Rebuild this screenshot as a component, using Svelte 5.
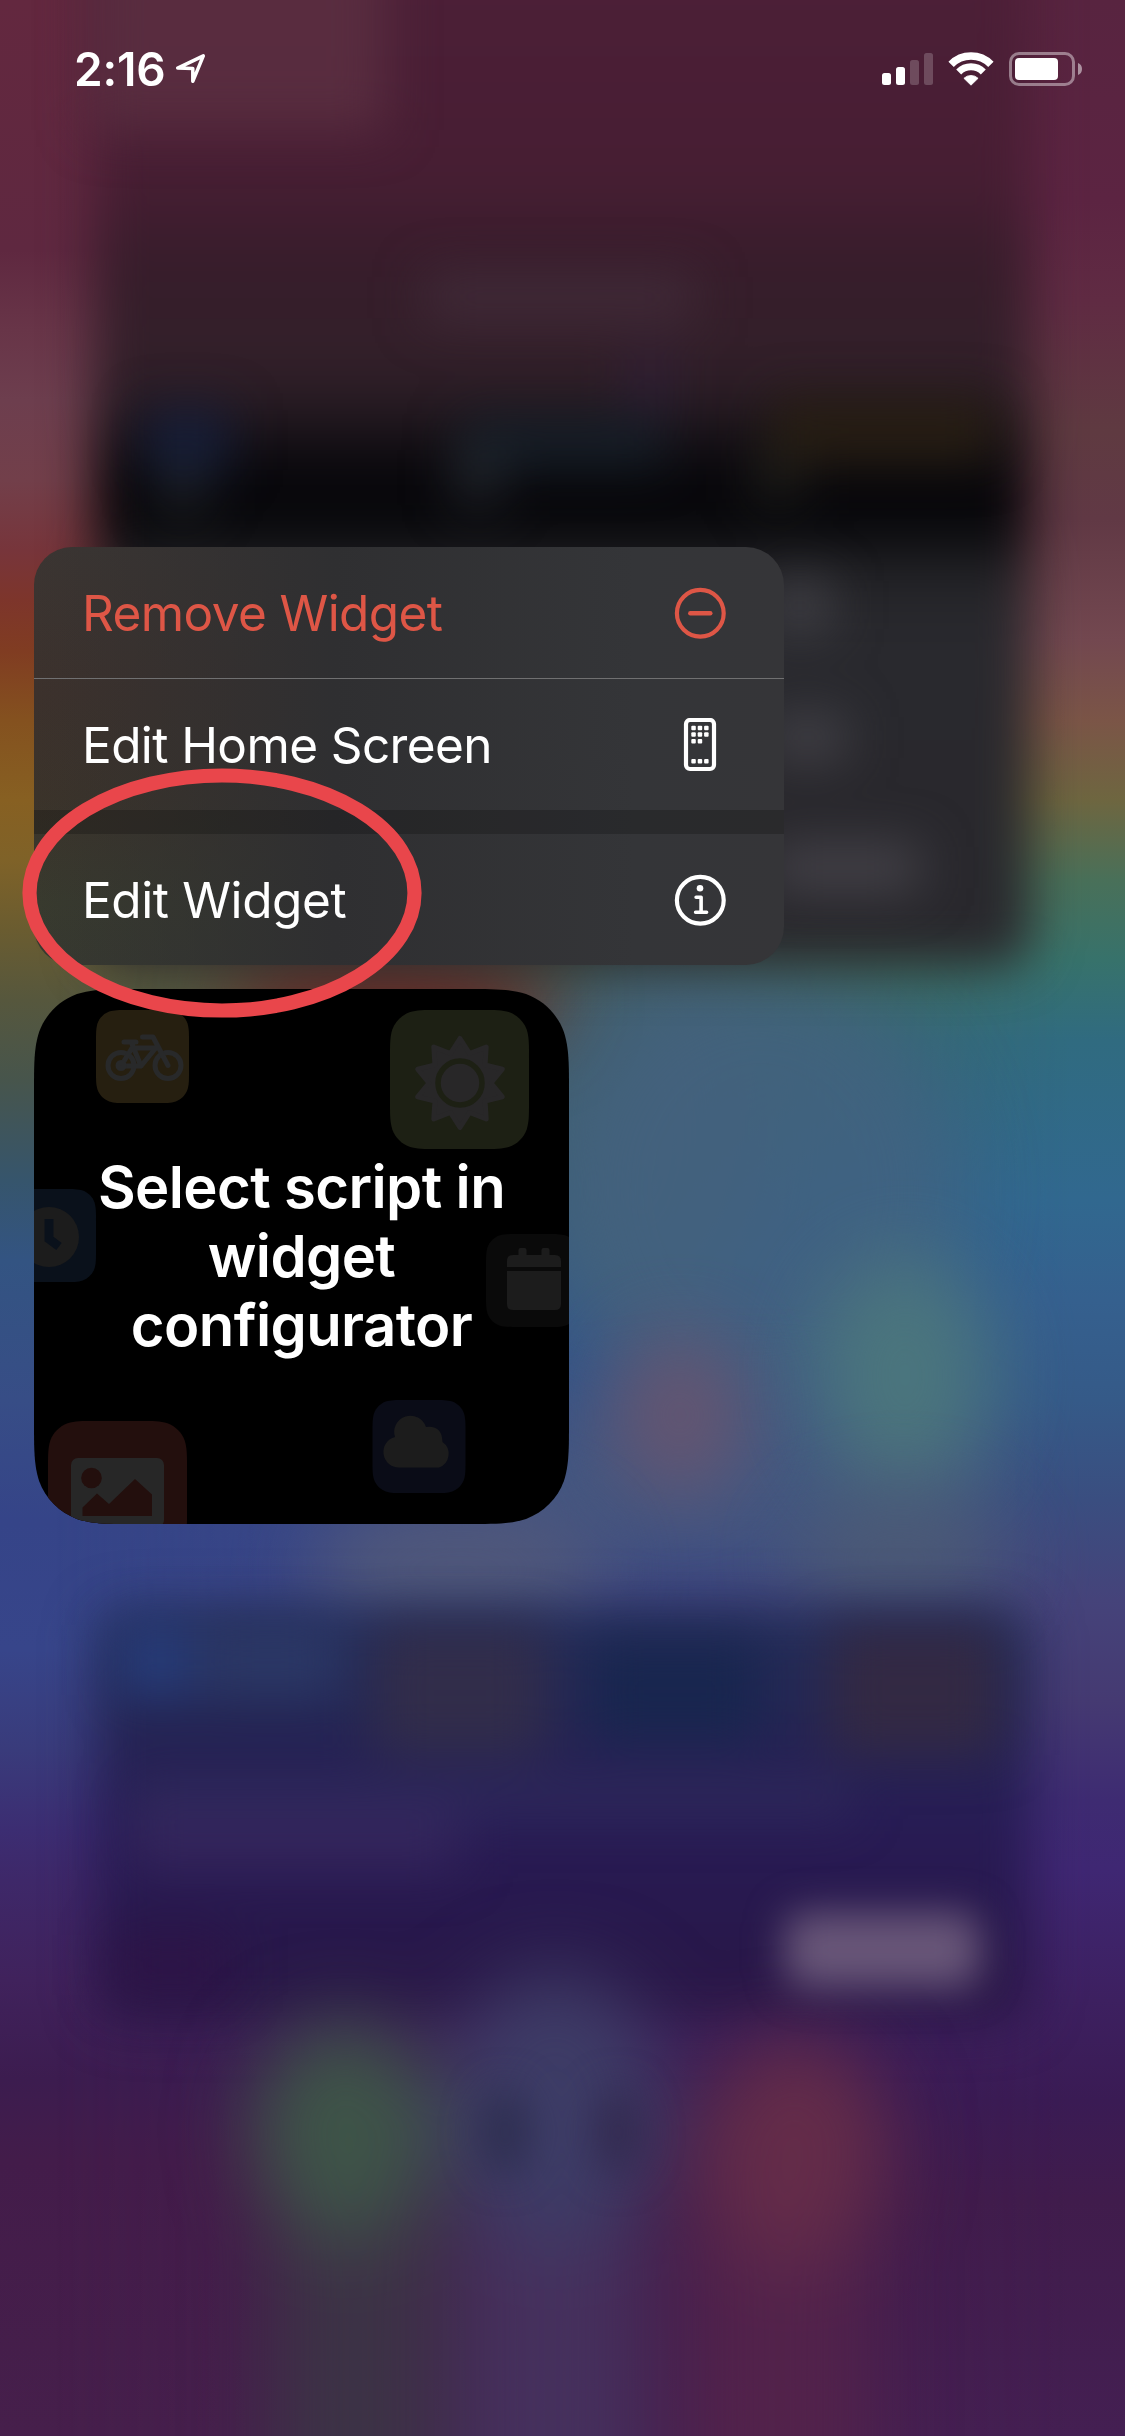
<script>
  const leftStops = [
    [0, '#63283f'], [250, '#5f2840'], [330, '#683548'], [400, '#6d3e4e'], [480, '#723f4a'], [550, '#77353b'],
    [600, '#7d352b'], [650, '#803c22'], [720, '#84511f'], [800, '#876022'], [860, '#7f6228'],
    [930, '#6a5c30'], [1000, '#56573d'], [1080, '#47554c'], [1180, '#36556c'], [1260, '#335482'],
    [1400, '#374d86'], [1520, '#354488'], [1650, '#37458a'], [1750, '#393b7b'], [1830, '#3c2d72'],
    [1880, '#3e2869'], [1980, '#40225c'], [2080, '#3c1c4f'], [2160, '#431c4a'], [2436, '#461f4b']
  ];
  const rightStops = [
    [0, '#582440'], [200, '#5c2442'], [300, '#602b43'], [430, '#5f3a41'], [520, '#613945'],
    [640, '#734850'], [720, '#7b5547'], [800, '#6e6640'], [880, '#497059'], [960, '#37726b'],
    [1040, '#306b80'], [1200, '#31688f'], [1300, '#35608e'], [1400, '#355a88'], [1500, '#3a4e80'],
    [1600, '#45437a'], [1700, '#453a72'], [1800, '#3e2b72'], [1870, '#3f2773'], [2000, '#3d2060'],
    [2100, '#3a1b54'], [2200, '#401c4c'], [2436, '#441f52']
  ];

  // Soft ellipses: cx, cy, rx, ry, fill, opacity
  const glows = [
    [640, 1130, 120, 190, '#436074', 0.8],
    [390, 1000, 170, 50, '#6a2321', 1],
    [760, 1190, 200, 220, '#446280', 0.75],
    [740, 1480, 260, 90, '#465b80', 0.7],
    [680, 1415, 70, 85, '#68556f', 0.9],
    [905, 1375, 90, 120, '#4e7a7c', 0.85],
    [460, 1570, 150, 80, '#525a7a', 0.9],
    [900, 1560, 110, 70, '#4e5c74', 0.8]
  ];
  const dock = [
    [345, 2130, 95, 110, '#3e5448', 1],
    [555, 2110, 110, 140, '#3d3c66', 1],
    [795, 2150, 95, 115, '#642c49', 1],
    [505, 2132, 24, 44, '#2b2c4c', 0.8],
    [618, 2132, 24, 44, '#31284c', 0.8]
  ];

  // Continuous-curvature rounded rectangle
  function squircle(x, y, w, h, r) {
    const R = x + w, B = y + h;
    const a = 1.5287 * r, b = 1.0885 * r, c = 0.8684 * r, d = 0.6315 * r, e = 0.3728 * r, f = 0.1691 * r, g = 0.0749 * r;
    return `M${x + a} ${y}L${R - a} ${y}C${R - b} ${y} ${R - c} ${y} ${R - d} ${y + g}C${R - e} ${y + f} ${R - f} ${y + e} ${R - g} ${y + d}C${R} ${y + c} ${R} ${y + b} ${R} ${y + a}` +
      `L${R} ${B - a}C${R} ${B - b} ${R} ${B - c} ${R - g} ${B - d}C${R - f} ${B - e} ${R - e} ${B - f} ${R - d} ${B - g}C${R - c} ${B} ${R - b} ${B} ${R - a} ${B}` +
      `L${x + a} ${B}C${x + b} ${B} ${x + c} ${B} ${x + d} ${B - g}C${x + e} ${B - f} ${x + f} ${B - e} ${x + g} ${B - d}C${x} ${B - c} ${x} ${B - b} ${x} ${B - a}` +
      `L${x} ${y + a}C${x} ${y + b} ${x} ${y + c} ${x + g} ${y + d}C${x + f} ${y + e} ${x + e} ${y + f} ${x + d} ${y + g}C${x + c} ${y} ${x + b} ${y} ${x + a} ${y}Z`;
  }

  const sunPoints = Array.from({ length: 20 }, (_, i) => {
    const t = (i * Math.PI) / 10 - Math.PI / 2;
    const r = i % 2 ? 31 : 44.5;
    return `${(426 + r * Math.cos(t)).toFixed(1)},${(94 + r * Math.sin(t)).toFixed(1)}`;
  }).join(' ');

  const appDots = [[0, 0], [1, 0], [2, 0], [0, 1], [1, 1], [2, 1], [0, 2], [1, 2], [0, 5], [1, 5], [2, 5]];
</script>

<main class="screen">
  <svg class="wallpaper" viewBox="0 0 1125 2436" aria-hidden="true">
    <defs>
      <linearGradient id="lg" gradientUnits="userSpaceOnUse" x1="0" y1="0" x2="0" y2="2436">
        {#each leftStops as [y, c]}<stop offset={y / 2436} stop-color={c} />{/each}
      </linearGradient>
      <linearGradient id="rg" gradientUnits="userSpaceOnUse" x1="0" y1="0" x2="0" y2="2436">
        {#each rightStops as [y, c]}<stop offset={y / 2436} stop-color={c} />{/each}
      </linearGradient>
      <linearGradient id="fade" x1="0" y1="0" x2="1" y2="0">
        <stop offset="0.05" stop-color="#000" /><stop offset="0.95" stop-color="#fff" />
      </linearGradient>
      <mask id="side"><rect width="1125" height="2436" fill="url(#fade)" /></mask>
      <linearGradient id="top" gradientUnits="userSpaceOnUse" x1="0" y1="-100" x2="0" y2="970">
        <stop offset="0.09" stop-color="#4c1f37" /><stop offset="0.26" stop-color="#471e33" />
        <stop offset="0.34" stop-color="#371d2b" /><stop offset="0.43" stop-color="#33202a" />
        <stop offset="0.48" stop-color="#241a21" /><stop offset="0.52" stop-color="#0d0b10" />
        <stop offset="0.565" stop-color="#050508" /><stop offset="0.585" stop-color="#09090c" />
        <stop offset="0.63" stop-color="#232327" />
        <stop offset="0.68" stop-color="#29292e" /><stop offset="1" stop-color="#29282d" />
      </linearGradient>
      <linearGradient id="low" gradientUnits="userSpaceOnUse" x1="0" y1="1600" x2="0" y2="2030">
        <stop offset="0" stop-color="#24305a" /><stop offset="0.25" stop-color="#242654" />
        <stop offset="0.55" stop-color="#281b54" /><stop offset="0.8" stop-color="#28184b" />
        <stop offset="1" stop-color="#2c1745" />
      </linearGradient>
      <filter id="b20" x="-50%" y="-80%" width="200%" height="260%" color-interpolation-filters="sRGB"><feGaussianBlur stdDeviation="19" /></filter>
      <filter id="b25" x="-20%" y="-20%" width="140%" height="140%" color-interpolation-filters="sRGB"><feGaussianBlur stdDeviation="25" /></filter>
      <filter id="b40" x="-150%" y="-250%" width="400%" height="600%" color-interpolation-filters="sRGB"><feGaussianBlur stdDeviation="40" /></filter>
    </defs>
    <rect width="1125" height="2436" fill="url(#lg)" />
    <rect width="1125" height="2436" fill="url(#rg)" mask="url(#side)" />

    {#each glows as [cx, cy, rx, ry, fill, o]}
      <ellipse {cx} {cy} {rx} {ry} {fill} opacity={o} filter="url(#b40)" />
    {/each}

    <rect x="94" y="-100" width="936" height="1066" rx="30" fill="url(#top)" filter="url(#b25)" />
    <g filter="url(#b25)">
      <rect x="90" y="-60" width="295" height="190" fill="#5d3143" opacity="0.75" />
      <rect x="425" y="275" width="270" height="45" fill="#46303f" opacity="0.7" />
      <rect x="145" y="410" width="85" height="60" fill="#152448" opacity="0.7" />
      <rect x="160" y="470" width="45" height="40" fill="#2c3034" opacity="0.7" />
      <rect x="460" y="420" width="205" height="45" fill="#152632" opacity="0.7" />
      <rect x="455" y="450" width="45" height="55" fill="#2c3138" opacity="0.7" />
      <rect x="770" y="400" width="225" height="60" fill="#2a2010" opacity="0.8" />
      <rect x="755" y="455" width="45" height="45" fill="#26251f" opacity="0.8" />
      <rect x="630" y="350" width="40" height="60" fill="#322050" opacity="0.4" />
      <rect x="770" y="580" width="60" height="50" fill="#4a494f" opacity="0.8" />
      <rect x="770" y="715" width="75" height="45" fill="#4a494f" opacity="0.8" />
      <rect x="770" y="845" width="150" height="45" fill="#4a484f" opacity="0.85" />
    </g>

    <rect x="96" y="1608" width="934" height="415" rx="30" fill="url(#low)" filter="url(#b25)" />
    <g filter="url(#b25)">
      <rect x="120" y="1625" width="70" height="70" fill="#273f80" opacity="0.9" />
      <rect x="200" y="1625" width="140" height="70" fill="#2c3a68" opacity="0.9" />
      <rect x="375" y="1625" width="170" height="130" fill="#332d49" opacity="0.9" />
      <rect x="590" y="1640" width="170" height="100" fill="#15254d" opacity="0.8" />
      <rect x="830" y="1625" width="170" height="130" fill="#342942" opacity="0.95" />
      <rect x="130" y="1780" width="720" height="35" fill="#322d5e" opacity="0.7" />
      <rect x="130" y="1815" width="330" height="55" fill="#392a60" opacity="0.7" />
      <rect x="110" y="1935" width="120" height="60" fill="#2f1246" opacity="0.7" />
    </g>

    <g filter="url(#b40)">
      <rect x="270" y="2140" width="170" height="420" fill="#3c3446" opacity="0.95" />
      <rect x="460" y="2140" width="180" height="420" fill="#46315e" opacity="0.95" />
      <rect x="690" y="2140" width="180" height="420" fill="#53234b" opacity="0.95" />
      {#each dock.slice(0, 3) as [cx, cy, rx, ry, fill]}
        <ellipse {cx} {cy} {rx} {ry} {fill} />
      {/each}
    </g>
    <g filter="url(#b20)">
      {#each dock.slice(3) as [cx, cy, rx, ry, fill, o]}
        <ellipse {cx} {cy} {rx} {ry} {fill} opacity={o} />
      {/each}
    </g>
    <rect x="785" y="1912" width="195" height="76" rx="20" fill="#685678" filter="url(#b20)" />
  </svg>

  <header class="status">
    <div class="clock">
      <span class="time">2:16</span>
      <svg class="location" width="32" height="32" viewBox="0 0 32 32" aria-hidden="true">
        <path d="M2.700 15.100 28.300 2.900 17.800 28.300V15.500Z" fill="none" stroke="#fff" stroke-width="3.500" stroke-linejoin="round" />
      </svg>
    </div>
    <div class="indicators">
      <svg width="51" height="32" viewBox="0 0 51 32" aria-hidden="true">
        <g fill="#fff">
          <rect y="20" width="9" height="12" rx="2.500" />
          <rect x="14" y="14" width="9" height="18" rx="2.500" />
          <rect x="28" y="7" width="9" height="25" rx="2.500" opacity=".2" />
          <rect x="42" width="9" height="32" rx="2.500" opacity=".2" />
        </g>
      </svg>
      <svg width="46" height="34" viewBox="0 0 46 34" aria-hidden="true">
        <g fill="none" stroke="#fff">
          <path d="M3.100 12.300A28 28 0 0 1 42.900 12.300" stroke-width="7.500" />
          <path d="M10.700 20A17.300 17.300 0 0 1 35.300 20" stroke-width="7" />
        </g>
        <path d="M23 33.200 15.900 26.300A10.200 10.200 0 0 1 30.100 26.300Z" fill="#fff" stroke="#fff" stroke-width=".8" stroke-linejoin="round" />
      </svg>
      <svg width="74" height="34" viewBox="0 0 74 34" aria-hidden="true">
        <rect x="1.500" y="1.500" width="63" height="31" rx="8.500" fill="none" stroke="#fff" stroke-opacity=".42" stroke-width="3" />
        <rect x="6" y="6" width="43" height="22" rx="4" fill="#fff" />
        <path d="M69 11Q73 12.500 73 17T69 23Z" fill="#fff" opacity=".5" />
      </svg>
    </div>
  </header>

  <nav class="menu">
    <button class="item danger">
      <span>Remove Widget</span>
      <svg width="52" height="52" viewBox="0 0 52 52" aria-hidden="true">
        <circle cx="26.300" cy="26.300" r="23.400" fill="none" stroke="currentColor" stroke-width="4.200" />
        <path d="M16.300 26.300H36.300" stroke="currentColor" stroke-width="4.400" stroke-linecap="round" />
      </svg>
    </button>
    <button class="item ruled">
      <span>Edit Home Screen</span>
      <svg width="52" height="54" viewBox="0 0 52 54" aria-hidden="true">
        <rect x="12" y="2" width="28" height="49" rx="4" fill="none" stroke="currentColor" stroke-width="4.200" />
        {#each appDots as [cx, cy]}
          <rect x={17.3 + cx * 6.4} y={7.7 + cy * 6.65} width="4.500" height="4.500" rx="1" fill="currentColor" />
        {/each}
      </svg>
    </button>
    <div class="gap"></div>
    <button class="item last">
      <span>Edit Widget</span>
      <svg width="52" height="52" viewBox="0 0 52 52" aria-hidden="true">
        <circle cx="26.300" cy="26.300" r="23.400" fill="none" stroke="currentColor" stroke-width="4.200" />
        <circle cx="26" cy="14.300" r="3.300" fill="currentColor" />
        <path d="M22.100 23.300H27.100V38.300M21.600 38.300H32.600" fill="none" stroke="currentColor" stroke-width="3.600" stroke-linecap="round" stroke-linejoin="round" />
      </svg>
    </button>
  </nav>

  <section class="widget">
    <svg class="art" viewBox="0 0 535 535" aria-hidden="true">
      <defs><clipPath id="shape"><path d={squircle(0, 0, 535, 535, 68)} /></clipPath></defs>
      <g clip-path="url(#shape)">
        <rect width="535" height="535" fill="#000" />
        <path d={squircle(62, 21, 93, 93, 21)} fill="#261f10" />
        <g fill="none" stroke="#28292a" stroke-width="5" stroke-linecap="round" stroke-linejoin="round">
          <circle cx="87" cy="76.500" r="13" />
          <circle cx="134" cy="76.500" r="13" />
          <path d="M134 76.500 119 48H108.500M90 53H102M98 55 107 77H87L98 59H121M107 77 121 60" />
          <circle cx="87" cy="76.500" r="3" />
        </g>
        <path d={squircle(356, 21, 139, 139, 31)} fill="#1d2014" />
        <polygon points={sunPoints} fill="#282728" stroke="#282728" stroke-width="5" stroke-linejoin="round" />
        <circle cx="426" cy="94" r="22" fill="none" stroke="#1d2014" stroke-width="5.500" />
        <path d={squircle(-31, 200, 93, 93, 21)} fill="#0a111b" />
        <circle cx="15" cy="248" r="30" fill="#1c1c1c" />
        <path d="M15 230V250L25 257.500" fill="none" stroke="#0a111b" stroke-width="9" />
        <path d={squircle(452, 245, 93, 93, 21)} fill="#0a0a0a" />
        <g fill="#1c1c1c">
          <path d="M473 278V272Q473 266 479 266H484.500V261Q484.500 259 486.500 259H490.500Q492.500 259 492.500 261V266H507.500V261Q507.500 259 509.500 259H513.500Q515.500 259 515.500 261V266H521Q527 266 527 272V278Z" />
          <path d="M473 282H527V315Q527 321 521 321H479Q473 321 473 315Z" />
        </g>
        <path d={squircle(14, 432, 139, 139, 31)} fill="#230f0d" />
        <rect x="37" y="469" width="93" height="69" rx="7" fill="#272727" />
        <g fill="#230f0d">
          <circle cx="57.500" cy="489" r="10.300" />
          <path d="M48.500 518.500 63 504.500 75 515 101 490 118 505.500V527H48.500Z" />
        </g>
        <path d={squircle(338.5, 411, 93, 93, 21)} fill="#0a0c17" />
        <path d="M365 478.500A15.500 15.500 0 0 1 361 448A16 16 0 0 1 392 438Q408 436 408.500 453A14.500 14.500 0 0 1 405 478.500Z" fill="#1c1c1c" />
      </g>
    </svg>
    <p>Select script in<br />widget<br />configurator</p>
  </section>

  <svg class="marker" viewBox="0 0 400 250" aria-hidden="true">
    <ellipse cx="200" cy="125" rx="192.500" ry="117.500" fill="none" stroke="#e9464b" stroke-width="14.200" />
  </svg>
</main>

<style>
  :global(body) { margin: 0; }
  .screen {
    position: relative;
    width: 1125px;
    height: 2436px;
    overflow: hidden;
    box-sizing: border-box;
    padding: 0 34px;
    font-family: Inter, 'Liberation Sans', sans-serif;
    color: #fff;
    isolation: isolate;
  }
  .wallpaper { position: absolute; inset: 0; width: 1125px; height: 2436px; z-index: -1; }
  .status {
    display: flex;
    justify-content: space-between;
    align-items: flex-start;
    height: 547px;
    box-sizing: border-box;
    padding: 52px 8px 0 40px;
  }
  .clock { display: flex; gap: 10px; align-items: flex-start; }
  .time { font-size: 46px; line-height: 34px; font-weight: 600; letter-spacing: -0.2px; width: 91px; white-space: nowrap; }
  .location { margin-top: 1px; }
  .indicators { display: flex; gap: 15px; align-items: flex-start; }
  .indicators svg:first-child { margin-top: 1px; }
  .menu {
    display: flex;
    flex-direction: column;
    width: 750px;
    height: 418px;
    border-radius: 38px;
    overflow: hidden;
    background:
      linear-gradient(90deg, transparent 0, #2f2f31 40%, #343538 80%, #353538 100%),
      linear-gradient(180deg, #3b3532 0, #3c312c 35%, #3b332a 60%, #383a2e 85%, #373930 100%);
  }
  .item {
    display: flex;
    justify-content: space-between;
    align-items: center;
    height: 131px;
    padding: 0 58px 0 48px;
    border: 0;
    background: none;
    color: #fff;
    font: 400 49.5px/60px Inter, 'Liberation Sans', sans-serif;
    letter-spacing: -0.6px;
    box-sizing: border-box;
    text-align: left;
  }
  .danger { color: #de5646; }
  .ruled { height: 132px; border-top: 1px solid #707071; }
  .last { letter-spacing: -0.4px; }
  .gap { height: 24px; background: rgba(0, 0, 0, 0.2); }
  .widget {
    position: relative;
    display: flex;
    justify-content: center;
    align-items: center;
    width: 535px;
    height: 535px;
    margin-top: 24px;
  }
  .art { position: absolute; inset: 0; width: 535px; height: 535px; }
  .widget p {
    position: relative;
    margin: 0;
    text-align: center;
    font-size: 58px;
    line-height: 69px;
    font-weight: 600;
    letter-spacing: -0.6px;
    white-space: nowrap;
  }
  .marker { position: absolute; left: 21.500px; top: 767.500px; width: 400px; height: 250px; }
</style>
